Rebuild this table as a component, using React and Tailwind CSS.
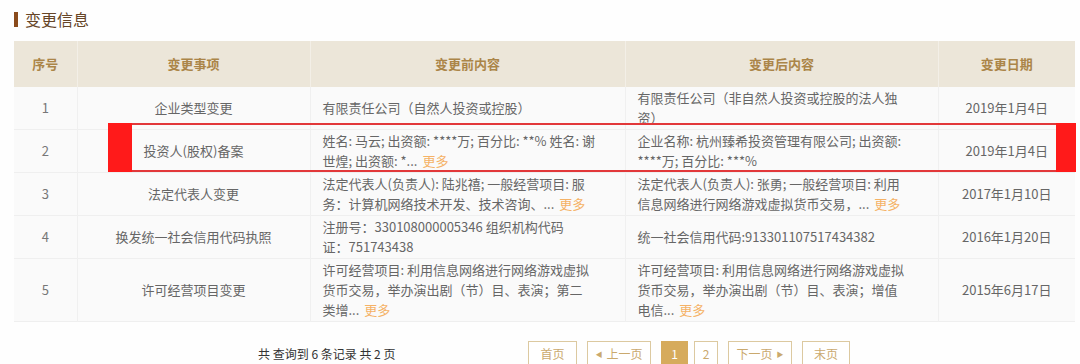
import React from 'react'

const more = <span className="text-[#f5b266] ml-[5px]">更多</span>

const rows = [
  {
    no: '1',
    item: '企业类型变更',
    before: [['有限责任公司（自然人投资或控股）']],
    after: [['有限责任公司（非自然人投资或控股的法人独'], ['资）']],
    date: '2019年1月4日',
  },
  {
    no: '2',
    item: '投资人(股权)备案',
    before: [['姓名: 马云; 出资额: ****万; 百分比: **% 姓名: 谢'], ['世煌; 出资额: *...', true]],
    after: [['企业名称: 杭州臻希投资管理有限公司; 出资额:'], ['****万; 百分比: ***%']],
    date: '2019年1月4日',
  },
  {
    no: '3',
    item: '法定代表人变更',
    before: [['法定代表人(负责人): 陆兆禧; 一般经营项目: 服'], ['务：计算机网络技术开发、技术咨询、...', true]],
    after: [['法定代表人(负责人): 张勇; 一般经营项目: 利用'], ['信息网络进行网络游戏虚拟货币交易，...', true]],
    date: '2017年1月10日',
  },
  {
    no: '4',
    item: '换发统一社会信用代码执照',
    before: [['注册号：330108000005346 组织机构代码'], ['证：751743438']],
    after: [['统一社会信用代码:913301107517434382']],
    date: '2016年1月20日',
  },
  {
    no: '5',
    item: '许可经营项目变更',
    before: [
      ['许可经营项目: 利用信息网络进行网络游戏虚拟'],
      ['货币交易，举办演出剧（节）目、表演；第二'],
      ['类增...', true],
    ],
    after: [
      ['许可经营项目: 利用信息网络进行网络游戏虚拟'],
      ['货币交易，举办演出剧（节）目、表演；增值'],
      ['电信...', true],
    ],
    date: '2015年6月17日',
  },
]

const Lines = ({ lines }) => (
  <div>
    {lines.map(([text, hasMore], i) => (
      <div key={i} className="whitespace-nowrap">
        {text}
        {hasMore && more}
      </div>
    ))}
  </div>
)

const PageBtn = ({ children, active, className = '' }) => (
  <div
    className={`h-[26px] flex items-center justify-center border text-[12px] ${
      active
        ? 'bg-[#d6ab5c] border-[#d6ab5c] text-white'
        : 'bg-white border-[#dcc9a0] text-[#caa96e]'
    } ${className}`}
  >
    {children}
  </div>
)

export default function App() {
  return (
    <div className="w-[1080px] h-[364px] overflow-hidden bg-[#fefefe] font-['Noto_Sans_CJK_SC','Noto_Sans',sans-serif]">
      {/* title */}
      <div className="flex items-center h-[18px] mt-[10px] pl-[14px]">
        <div className="w-[4px] h-[15px] bg-[#8a4b1c]" />
        <div className="ml-[7px] text-[16px] leading-[18px] text-[#664527]">变更信息</div>
      </div>

      {/* table */}
      <div className="relative mt-[13px] ml-[14px] w-[1061px]">
        <table className="w-[1061px] table-fixed border-collapse text-[13px] leading-[20px] text-[#666]">
          <colgroup>
            <col className="w-[63px]" />
            <col className="w-[233px]" />
            <col className="w-[315px]" />
            <col className="w-[313px]" />
            <col className="w-[137px]" />
          </colgroup>
          <thead>
            <tr className="h-[46px] bg-[#ece6d9] text-[#ab8548] font-bold text-[13px]">
              <th className="border-r border-[#f3efe7]">序号</th>
              <th className="border-r border-[#f3efe7]">变更事项</th>
              <th className="border-r border-[#f3efe7]">变更前内容</th>
              <th className="border-r border-[#f3efe7]">变更后内容</th>
              <th>变更日期</th>
            </tr>
          </thead>
          <tbody>
            {rows.map((r) => (
              <tr key={r.no} className="bg-[#fafafa] border-b border-[#efefef]">
                <td className="text-center text-[#777] py-[1px] border-r border-[#f0f0f0]">{r.no}</td>
                <td className="text-center py-[1px] border-r border-[#f0f0f0]">{r.item}</td>
                <td className="pl-[12px] py-[1px] border-r border-[#f0f0f0]">
                  <Lines lines={r.before} />
                </td>
                <td className="pl-[12px] py-[1px] border-r border-[#f0f0f0]">
                  <Lines lines={r.after} />
                </td>
                <td className="text-center py-[1px]">{r.date}</td>
              </tr>
            ))}
          </tbody>
        </table>

        {/* red highlight over row 2 */}
        <div className="absolute left-[94px] top-[82px] w-[968px] h-[49px] border-2 border-[#e2383a] pointer-events-none" />
        <div className="absolute left-[94px] top-[82px] w-[24px] h-[49px] bg-[#ff1a1a]" />
        <div className="absolute left-[1042px] top-[82px] w-[20px] h-[49px] bg-[#ff1a1a]" />
      </div>

      {/* pagination */}
      <div className="flex items-center mt-[19px] pl-[258px]">
        <div className="w-[270px] text-[12px] text-[#333]">共 查询到 6 条记录 共 2 页</div>
        <PageBtn className="w-[49px]">首页</PageBtn>
        <PageBtn className="w-[64px] ml-[10px]">
          <span className="text-[7px] mr-[4px]">◀</span>上一页
        </PageBtn>
        <PageBtn active className="w-[27px] ml-[10px]">1</PageBtn>
        <PageBtn className="w-[24px] ml-[6px]">2</PageBtn>
        <PageBtn className="w-[64px] ml-[10px]">
          下一页<span className="text-[7px] ml-[4px]">▶</span>
        </PageBtn>
        <PageBtn className="w-[48px] ml-[10px]">末页</PageBtn>
      </div>
    </div>
  )
}
